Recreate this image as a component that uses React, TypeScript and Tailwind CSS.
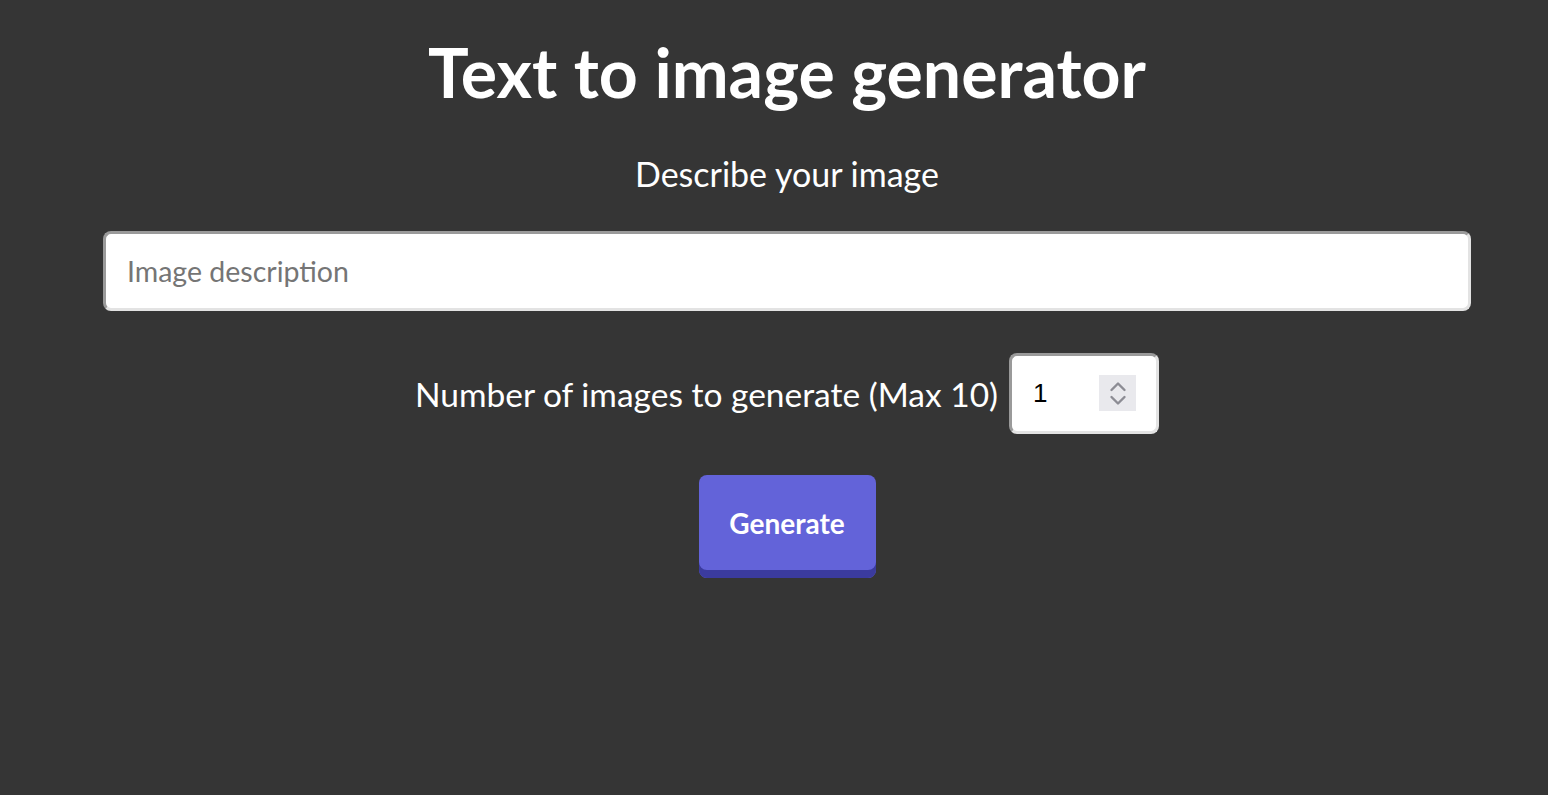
import React, { useState } from 'react';

export default function App() {
  const [prompt, setPrompt] = useState('');
  const [count, setCount] = useState(1);

  const step = (d: number) => setCount((c) => Math.min(10, Math.max(1, c + d)));

  return (
    <div className="min-h-screen w-full bg-[#353535] text-white flex flex-col items-center pl-[26px]" style={{ fontFamily: 'Lato, "Noto Sans", sans-serif' }}>
      {/* Title */}
      <h1 className="mt-[26px] text-[68px] leading-[92px] font-bold">Text to image generator</h1>

      <p className="mt-[36px] text-[34px] leading-[40px]">Describe your image</p>

      {/* Prompt input */}
      <input
        type="text"
        value={prompt}
        onChange={(e) => setPrompt(e.target.value)}
        placeholder="Image description"
        className="mt-[37px] w-[1368px] h-[80px] bg-white rounded-[8px] border-[3px] border-t-[#9a9a9a] border-l-[#9a9a9a] border-b-[#e3e3e3] border-r-[#e3e3e3] px-[21px] text-[28.5px] text-black placeholder:text-[#757575] outline-none"
      />

      {/* Count row */}
      <div className="mt-[42px] flex items-center gap-[11px]">
        <label className="text-[33.5px] leading-[40px]">Number of images to generate (Max 10)</label>
        <div className="relative">
          <input
            type="number"
            min={1}
            max={10}
            value={count}
            onChange={(e) => setCount(Number(e.target.value))}
            className="appearance-none [&::-webkit-inner-spin-button]:appearance-none [&::-webkit-outer-spin-button]:appearance-none [-moz-appearance:textfield] w-[150px] h-[81px] bg-white rounded-[8px] border-[3px] border-t-[#9a9a9a] border-l-[#9a9a9a] border-b-[#e3e3e3] border-r-[#e3e3e3] pl-[21px] pr-[20px] text-[26px] text-black outline-none"
            style={{ fontFamily: '"Liberation Sans", Arial, sans-serif' }}
          />
          {/* Spinner */}
          <div className="absolute left-[90px] top-[22px] w-[37px] h-[36px] bg-[#e9e9ed] flex flex-col items-center justify-center gap-[3px]">
            <button onClick={() => step(1)} className="block">
              <svg width="18" height="11" viewBox="0 0 18 11" fill="none" stroke="#8c8c94" strokeWidth="2.4" strokeLinecap="round" strokeLinejoin="round">
                <path d="M2.5 9 L9 2.5 L15.5 9" />
              </svg>
            </button>
            <button onClick={() => step(-1)} className="block">
              <svg width="18" height="11" viewBox="0 0 18 11" fill="none" stroke="#8c8c94" strokeWidth="2.4" strokeLinecap="round" strokeLinejoin="round">
                <path d="M2.5 2 L9 8.5 L15.5 2" />
              </svg>
            </button>
          </div>
        </div>
      </div>

      {/* Generate button */}
      <button className="mt-[41px] w-[177px] h-[103px] bg-[#6363d9] rounded-[8px] shadow-[inset_0_-8px_0_#3b3b9e] pb-[8px] text-[28px] font-bold text-white">
        Generate
      </button>
    </div>
  );
}
